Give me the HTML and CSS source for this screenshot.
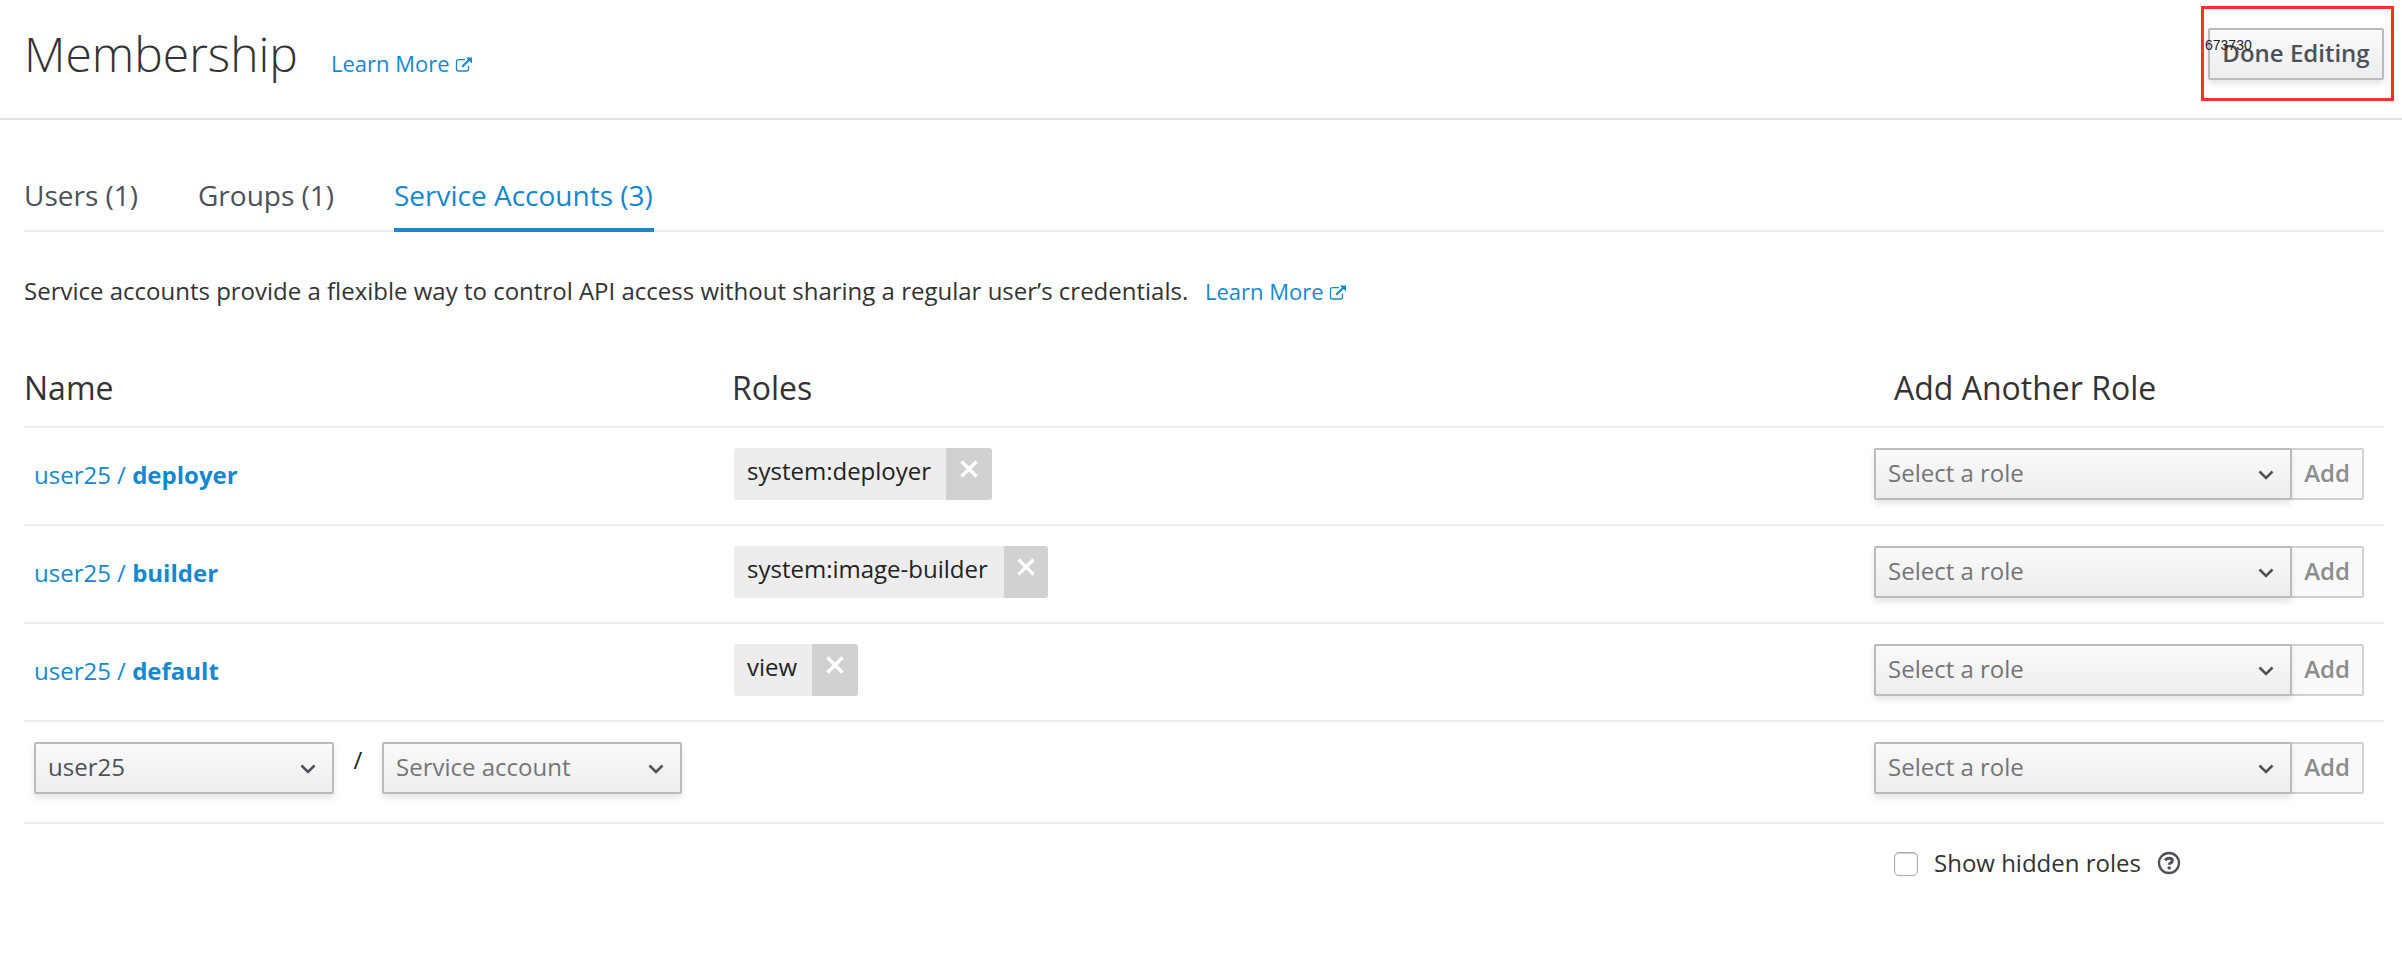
FILE: index.html
```html
<!DOCTYPE html>
<html lang="en">
<head>
<meta charset="utf-8">
<title>Membership</title>
<link rel="stylesheet" href="styles.css">
</head>
<body>
<svg width="0" height="0" class="defs">
  <symbol id="ext" viewBox="0 0 18 16"><path d="M10 2.6H3.6Q1.5 2.6 1.5 4.7v7.2Q1.500 14 3.600 14h7.800Q13.500 14 13.500 12V8.800" fill="none" stroke="currentColor" stroke-width="1.300"/><path d="M7.200 9.800 14.500 2.500" stroke="currentColor" stroke-width="2.200"/><path d="M10.800.4H17v6.200z" fill="currentColor"/></symbol>
  <symbol id="chev" viewBox="0 0 16 10"><path d="M1.500 1.500 8 8l6.500-6.500" fill="none" stroke="currentColor" stroke-width="2.500"/></symbol>
  <symbol id="x" viewBox="0 0 18 18"><path d="m1.500 1.500 15 15m0-15-15 15" fill="none" stroke="currentColor" stroke-width="3.300"/></symbol>
</svg>
<header class="top">
  <h1 class="title">Membership</h1>
  <a class="learn">Learn More<svg class="ext"><use href="#ext"/></svg></a>
  <div class="action"><button class="done">Done Editing</button><span class="code">673730</span></div>
</header>
<main class="content">
  <nav class="tabs">
    <a class="tab t1">Users (1)</a><a class="tab t2">Groups (1)</a><a class="tab active">Service Accounts (3)</a>
  </nav>
  <p class="desc"><span class="desc-text">Service accounts provide a flexible way to control API access without sharing a regular user’s credentials.</span><a class="learn">Learn More<svg class="ext"><use href="#ext"/></svg></a></p>
  <section class="table">
    <div class="row head"><h3 class="h">Name</h3><h3 class="h">Roles</h3><h3 class="h add-h">Add Another Role</h3></div>
    <div class="row">
      <a class="name">user25 / <b>deployer</b></a>
      <div class="cell"><span class="chip"><span class="role c1">system:deployer</span><span class="close k46"><svg><use href="#x"/></svg></span></span></div>
      <div class="cell"><div class="select wide"><span>Select a role</span><svg><use href="#chev"/></svg></div><button class="add">Add</button></div>
    </div>
    <div class="row">
      <a class="name">user25 / <b>builder</b></a>
      <div class="cell"><span class="chip"><span class="role c2">system:image-builder</span><span class="close k44"><svg><use href="#x"/></svg></span></span></div>
      <div class="cell"><div class="select wide"><span>Select a role</span><svg><use href="#chev"/></svg></div><button class="add">Add</button></div>
    </div>
    <div class="row">
      <a class="name">user25 / <b>default</b></a>
      <div class="cell"><span class="chip"><span class="role c3">view</span><span class="close k46"><svg><use href="#x"/></svg></span></span></div>
      <div class="cell"><div class="select wide"><span>Select a role</span><svg><use href="#chev"/></svg></div><button class="add">Add</button></div>
    </div>
    <div class="row last">
      <div class="cell pick"><div class="select dark"><span>user25</span><svg><use href="#chev"/></svg></div><span class="slash">/</span><div class="select"><span>Service account</span><svg><use href="#chev"/></svg></div></div>
      <div class="cell"></div>
      <div class="cell"><div class="select wide"><span>Select a role</span><svg><use href="#chev"/></svg></div><button class="add">Add</button></div>
    </div>
  </section>
  <label class="hidden-roles"><span class="box"></span><span class="label">Show hidden roles</span><svg class="help" viewBox="0 0 24 24"><circle cx="12" cy="12" r="10" fill="none" stroke="currentColor" stroke-width="2.300"/><path d="M8.300 9.500Q9.400 7.200 12.100 7.200q3.200 0 3.200 2.500 0 1.600-1.700 2.400-1.400.6-1.400 1.700" fill="none" stroke="currentColor" stroke-width="3"/><path d="M10.600 15.500h3.200v2.900h-3.200z" fill="currentColor"/></svg></label>
</main>
</body>
</html>
```
FILE: styles.css
```css
* { box-sizing: border-box; }
body { margin: 0; background: #fff; color: #333; font: 24px/36px "Open Sans", "Noto Sans", sans-serif; white-space: nowrap; }
h1, h3, p { margin: 0; font-weight: 400; }
button { font: inherit; padding: 0; }
.defs { display: block; }
.top { height: 120px; border-bottom: 2px solid #e4e4e4; padding-left: 24px; display: flex; align-items: flex-start; }
.title { width: 307px; font-size: 48px; font-weight: 300; line-height: 108px; }
.learn { color: #1588cf; font-size: 22px; display: flex; align-items: center; }
.top .learn { line-height: 36px; margin-top: 45px; }
.ext { width: 18px; height: 16px; margin-left: 5px; margin-top: 4px; }
.action { position: relative; margin: 6px 8px 0 auto; width: 193px; height: 95px; border: 3px solid #ff3122; padding: 19px 0 0 4px; }
.done { display: block; width: 176px; height: 52px; border: 2px solid #bbb; border-radius: 2px; background: linear-gradient(#fafafa, #ededed); box-shadow: 0 4px 6px rgba(3,3,3,.1); color: #4d5258; font-weight: 600; line-height: 45px; padding-bottom: 3px; }
.code { position: absolute; left: 1px; top: 28px; font: 14px/16px "Liberation Sans", sans-serif; color: #222; }
.content { padding: 40px 18px 0 24px; }
.tabs { height: 72px; display: flex; border-bottom: 2px solid #ededed; font-size: 28px; line-height: 71px; color: #4d5258; }
.tab { height: 72px; }
.t1 { width: 174px; }
.t2 { width: 196px; }
.active { color: #1588cf; width: 260px; border-bottom: 4px solid #1588cf; }
.desc { display: flex; height: 118px; padding-top: 41px; }
.desc-text { width: 1181px; }
.desc .learn { height: 36px; }
.row { display: grid; grid-template-columns: 710px 1140px 1fr; height: 98px; border-bottom: 2px solid #ededed; }
.head { height: 78px; }
.h { font-size: 32px; line-height: 75px; }
.h:nth-child(2) { margin-left: -2px; }
.add-h { padding-left: 20px; }
.name { padding-left: 10px; line-height: 93px; color: #1588cf; }
.name b { font-weight: 700; }
.cell { display: flex; padding-top: 20px; }
.last { height: 102px; }
.chip { display: flex; height: 52px; border-radius: 3px; overflow: hidden; background: #ededed; color: #222; line-height: 45px; }
.role { padding-left: 13px; }
.c1 { width: 212px; }
.c2 { width: 270px; }
.c3 { width: 78px; }
.close { background: #d1d1d1; color: #fff; display: flex; justify-content: center; padding-top: 12px; }
.close svg { width: 18px; height: 18px; }
.k46 { width: 46px; }
.k44 { width: 44px; }
.select { width: 300px; height: 52px; display: flex; justify-content: space-between; align-items: flex-start; border: 2px solid #bbb; border-radius: 2px; background: linear-gradient(#fafafa, #ededed); box-shadow: 0 4px 6px rgba(3,3,3,.1); color: #757575; line-height: 45px; padding: 0 16px 0 12px; position: relative; z-index: 1; }
.select svg { width: 16px; height: 10px; margin-top: 20px; color: #4d5258; }
.dark { color: #4d5258; }
.wide { width: 418px; }
.add { width: 74px; height: 52px; margin-left: -2px; border: 2px solid #d1d1d1; border-radius: 2px; background: #fafafa; color: #8b8d8f; font-weight: 600; line-height: 45px; padding-bottom: 3px; }
.pick { padding-left: 10px; }
.slash { width: 48px; text-align: center; line-height: 36px; color: #222; }
.hidden-roles { display: flex; align-items: center; height: 36px; margin: 21px 0 0 1870px; }
.box { width: 24px; height: 24px; border: 1.500px solid #aaa; border-radius: 5px; margin: 2px 16px 0 0; box-shadow: inset 0 1px 1px #ccc; }
.label { width: 218px; }
.help { width: 24px; height: 24px; margin-left: 5px; margin-bottom: 1px; color: #4d5258; }
```
